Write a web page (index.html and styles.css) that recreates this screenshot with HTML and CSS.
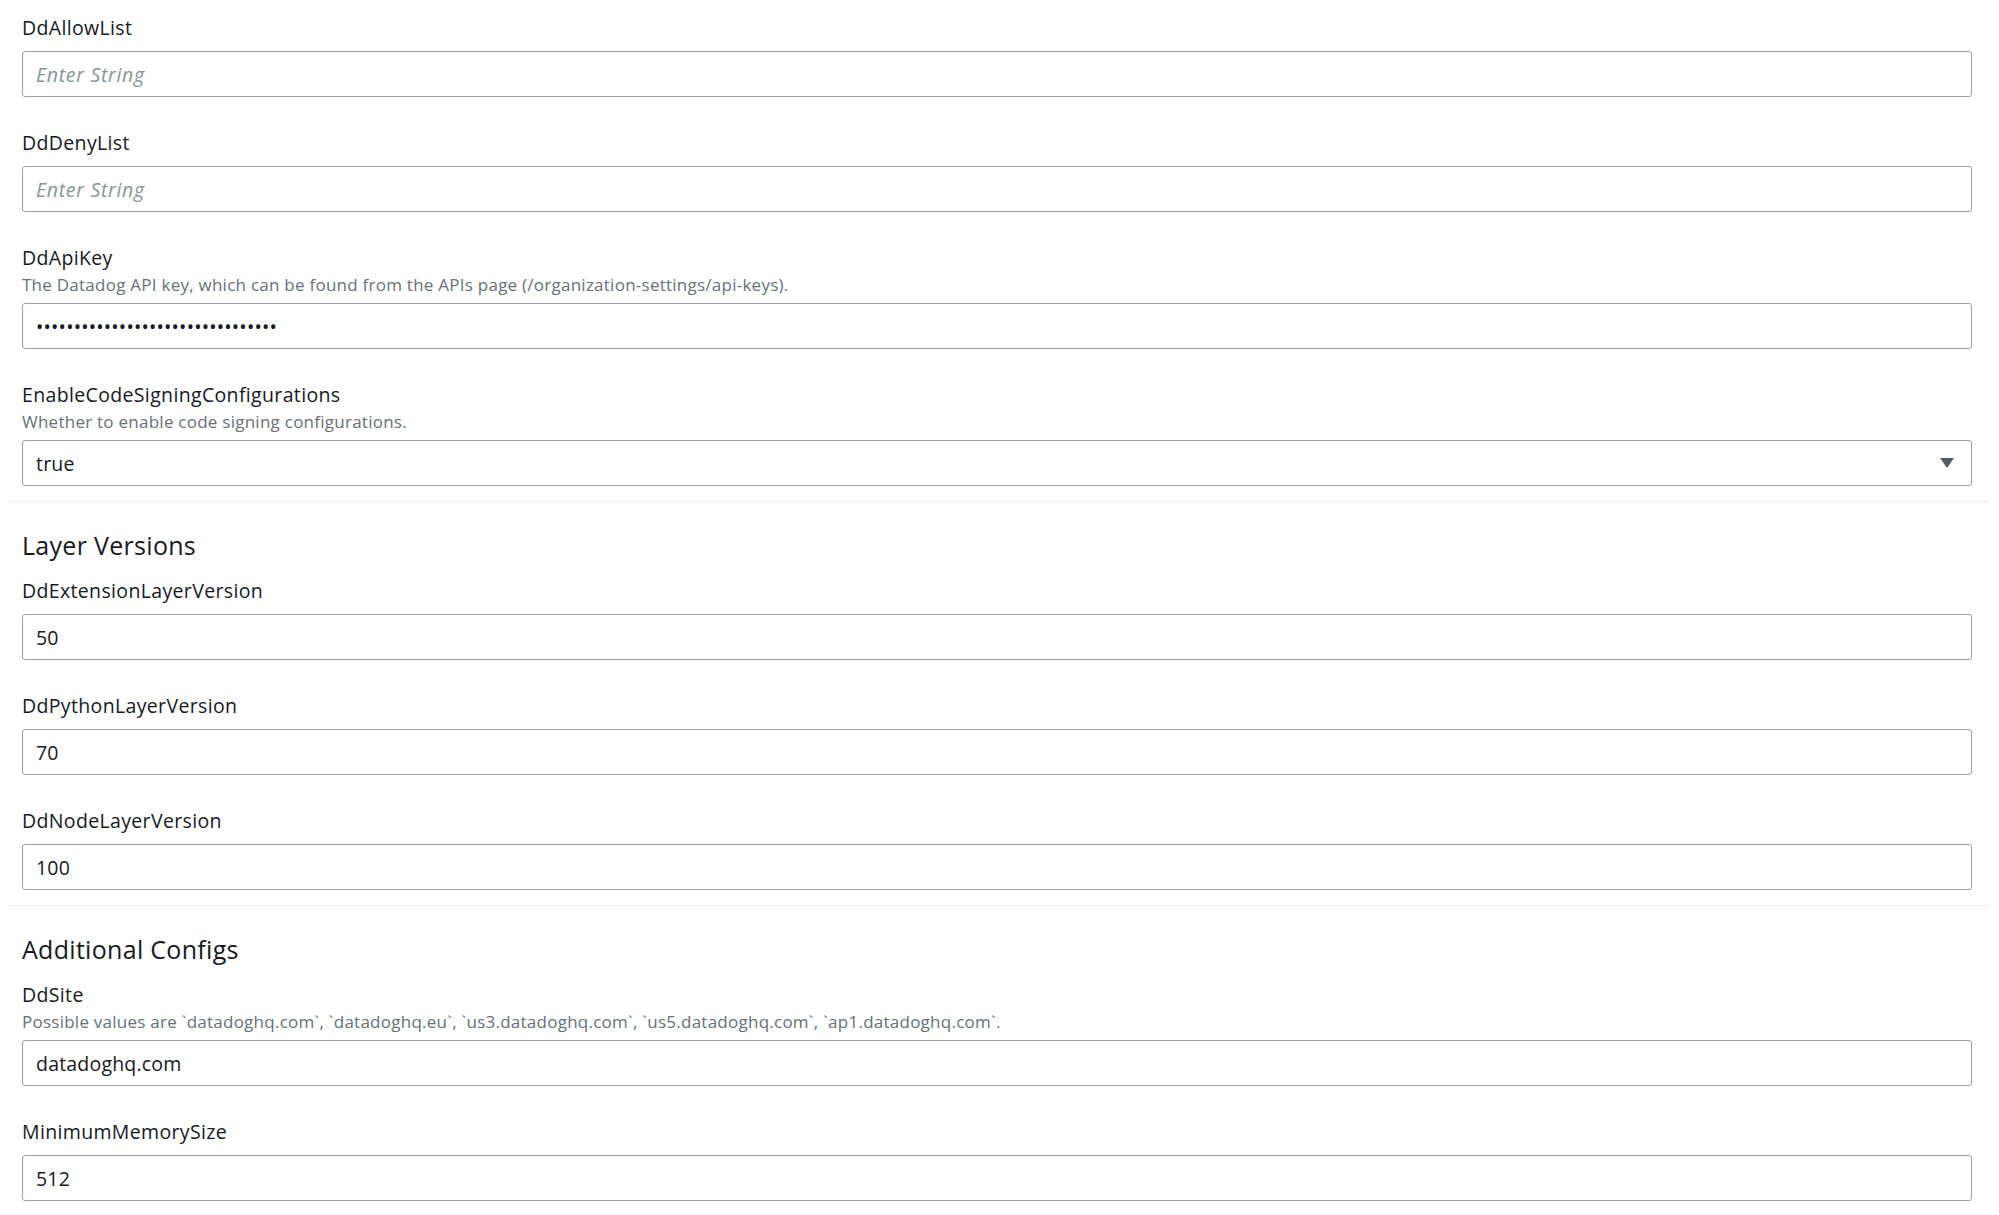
FILE: index.html
```html
<!DOCTYPE html>
<html lang="en">
<head>
<meta charset="utf-8">
<title>Parameters</title>
<link rel="stylesheet" href="styles.css">
</head>
<body>
<div class="page">
  <section class="group">
    <div class="field">
      <label class="label">DdAllowList</label>
      <input class="input" type="text" placeholder="Enter String">
    </div>
    <div class="field">
      <label class="label">DdDenyList</label>
      <input class="input" type="text" placeholder="Enter String">
    </div>
    <div class="field">
      <label class="label">DdApiKey</label>
      <div class="desc">The Datadog API key, which can be found from the APIs page (/organization-settings/api-keys).</div>
      <input class="input" type="password" value="xxxxxxxxxxxxxxxxxxxxxxxxxxxxxxxx">
    </div>
    <div class="field field-last">
      <label class="label">EnableCodeSigningConfigurations</label>
      <div class="desc">Whether to enable code signing configurations.</div>
      <div class="input select">
        <span>true</span>
        <svg class="caret" width="14" height="10" viewBox="0 0 14 10"><path d="M0 0 H14 L7 10 Z" fill="#545b64"/></svg>
      </div>
    </div>
  </section>
  <div class="divider"></div>
  <section class="group">
    <h2 class="heading">Layer Versions</h2>
    <div class="field">
      <label class="label">DdExtensionLayerVersion</label>
      <input class="input" type="text" value="50">
    </div>
    <div class="field">
      <label class="label">DdPythonLayerVersion</label>
      <input class="input" type="text" value="70">
    </div>
    <div class="field field-last">
      <label class="label">DdNodeLayerVersion</label>
      <input class="input" type="text" value="100">
    </div>
  </section>
  <div class="divider"></div>
  <section class="group">
    <h2 class="heading">Additional Configs</h2>
    <div class="field">
      <label class="label">DdSite</label>
      <div class="desc">Possible values are `datadoghq.com`, `datadoghq.eu`, `us3.datadoghq.com`, `us5.datadoghq.com`, `ap1.datadoghq.com`.</div>
      <input class="input" type="text" value="datadoghq.com">
    </div>
    <div class="field field-last">
      <label class="label">MinimumMemorySize</label>
      <input class="input" type="text" value="512">
    </div>
  </section>
</div>
</body>
</html>
```

FILE: styles.css
```css
html, body {
  margin: 0;
  padding: 0;
  background: #ffffff;
}

body {
  font-family: "Open Sans", "Noto Sans", "Liberation Sans", sans-serif;
  color: #16191f;
}

.page {
  width: 1980px;
  padding: 14px 0 0 8px;
}

.group {
  padding: 0 16px 0 14px;
  display: flex;
  flex-direction: column;
}

.field {
  display: flex;
  flex-direction: column;
  margin-bottom: 32px;
}

.field-last {
  margin-bottom: 15px;
}

.label {
  font-size: 19.5px;
  letter-spacing: 0.35px;
  line-height: 28px;
  color: #16191f;
  margin-bottom: 9px;
}

.desc {
  font-size: 17px;
  letter-spacing: 0.25px;
  line-height: 22px;
  color: #687078;
  margin-top: -7px;
  margin-bottom: 7px;
}

.input {
  box-sizing: border-box;
  height: 46px;
  width: 100%;
  margin: 0;
  border: 1px solid #9aa0a8;
  border-radius: 3px;
  padding: 0 13px;
  font-family: "Open Sans", "Noto Sans", "Liberation Sans", sans-serif;
  font-size: 19.5px;
  letter-spacing: 0.2px;
  color: #16191f;
  background: #ffffff;
  outline: none;
}

.input::placeholder {
  color: #879596;
  font-style: italic;
  letter-spacing: 0.7px;
}

.select {
  display: flex;
  align-items: center;
  justify-content: space-between;
  padding-right: 17px;
}

.caret {
  display: block;
}

.divider {
  height: 1px;
  background: #eaeded;
}

.heading {
  margin: 27px 0 16px 0;
  font-size: 25px;
  letter-spacing: 0.3px;
  line-height: 32px;
  font-weight: 400;
  color: #16191f;
}
```
